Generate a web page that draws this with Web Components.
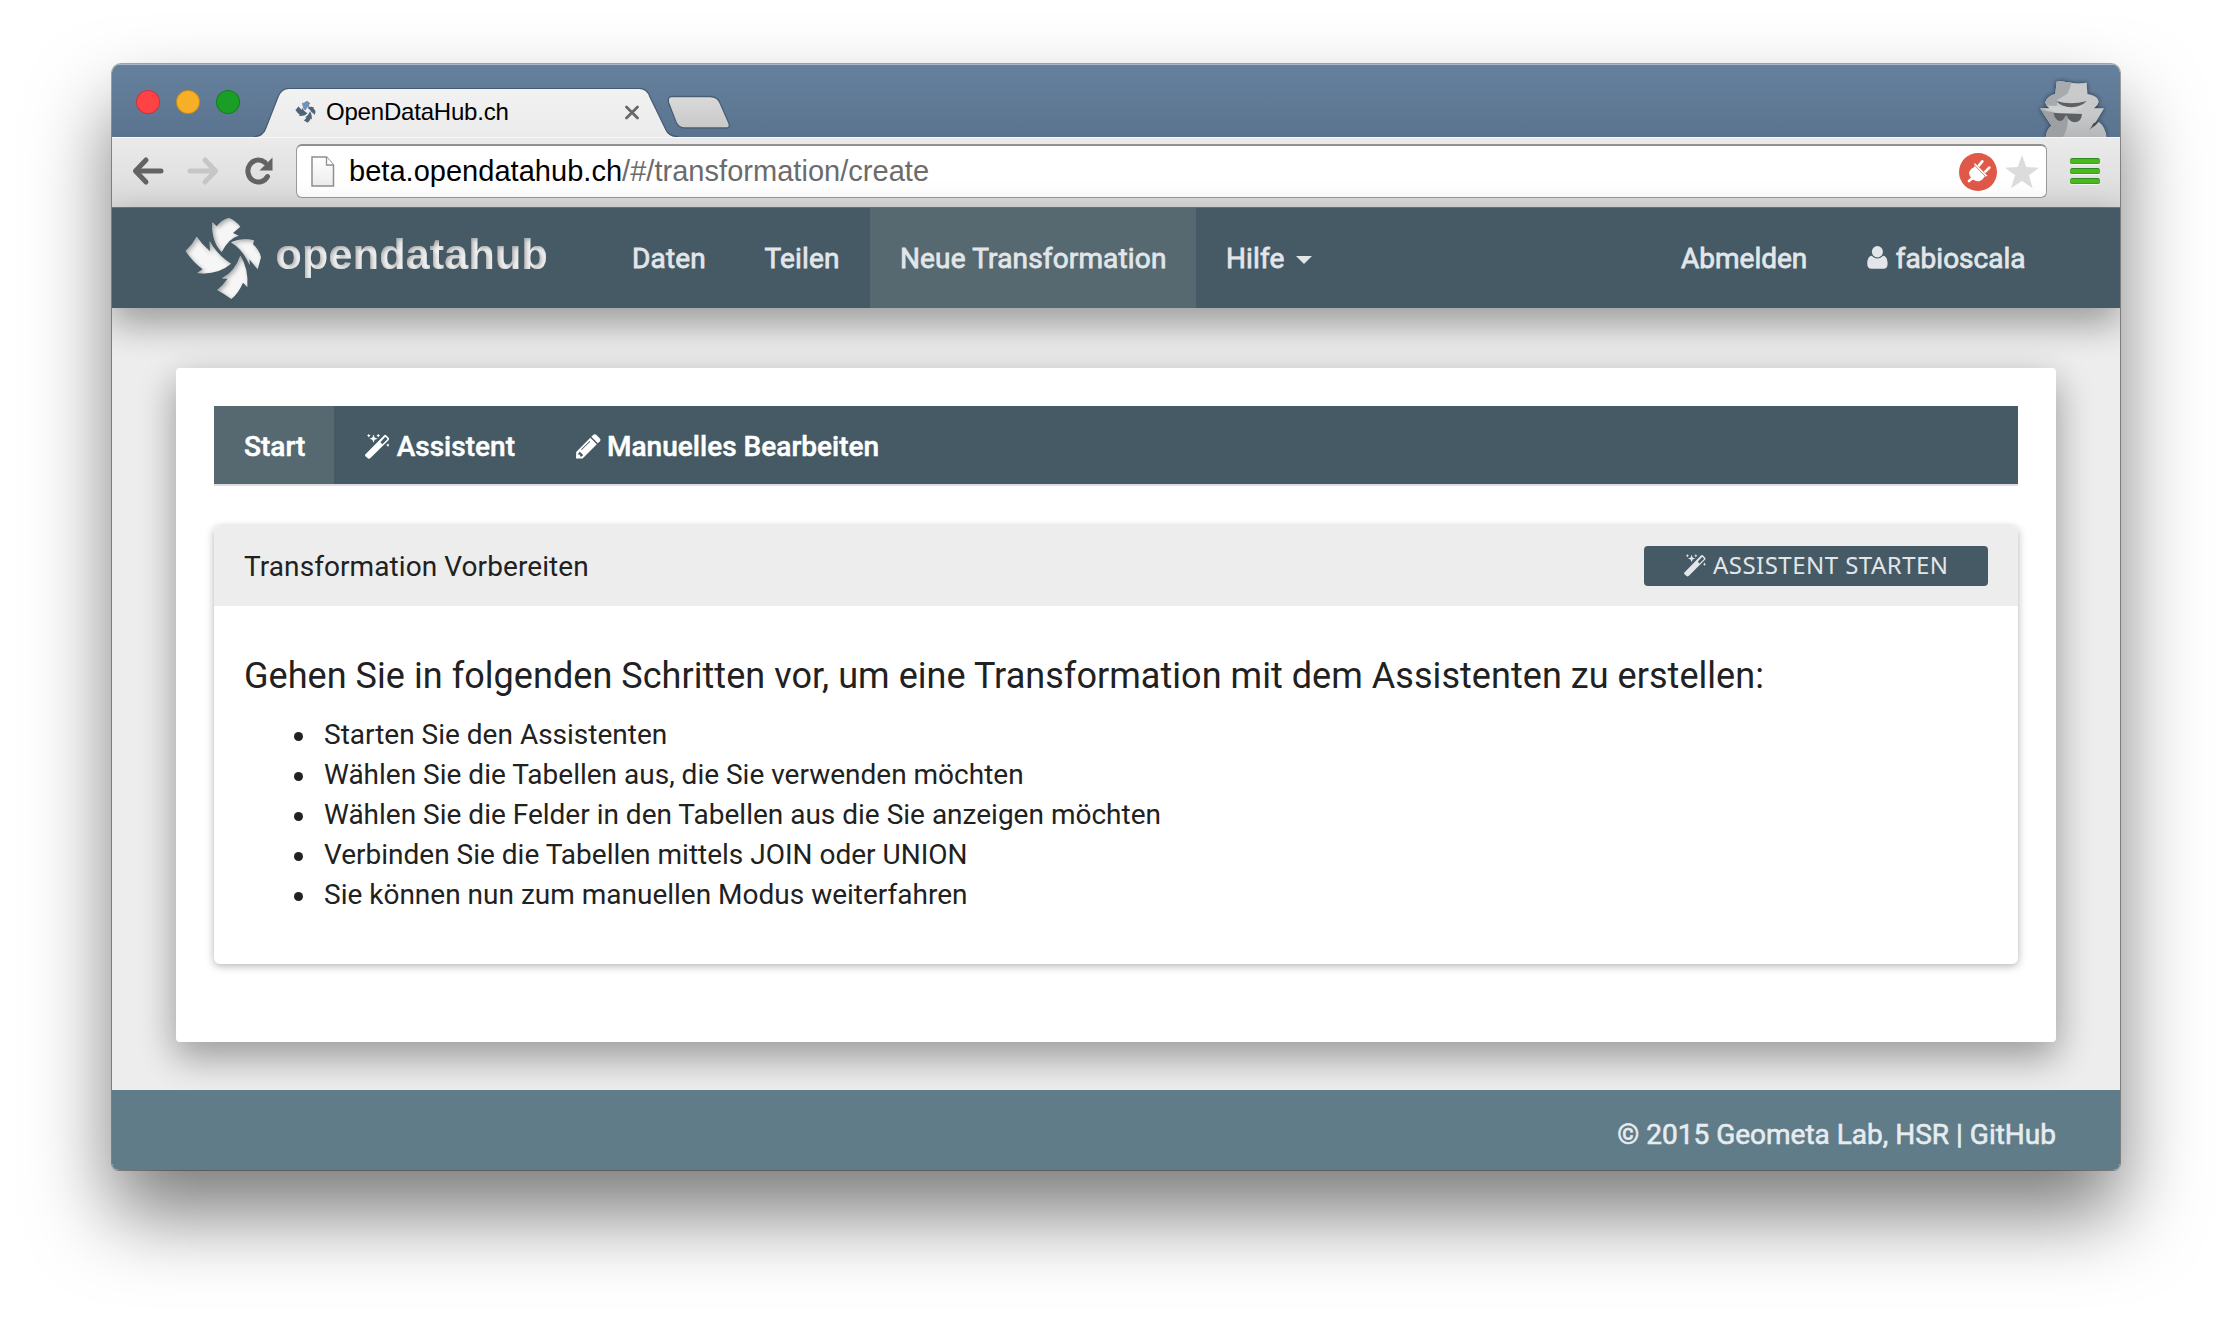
<!DOCTYPE html>
<html lang="de">
<head>
<meta charset="utf-8">
<title>OpenDataHub.ch</title>
<style>
body{margin:0;background:#fff;font-family:Roboto,"Liberation Sans",sans-serif;font-size:28px;color:#212121}
</style>
</head>
<body>
<browser-window>
  <title-bar slot="chrome" label="OpenDataHub.ch"></title-bar>
  <tool-bar slot="chrome" host="beta.opendatahub.ch" path="/#/transformation/create"></tool-bar>
  <site-nav>
    <nav-item style="width:132.5px">Daten</nav-item>
    <nav-item style="width:135.5px">Teilen</nav-item>
    <nav-item style="width:326px" active>Neue Transformation</nav-item>
    <nav-item style="width:146px" caret>Hilfe</nav-item>
    <nav-item slot="end" style="width:185.5px">Abmelden</nav-item>
    <nav-item slot="end" style="width:189px" icon="user">fabioscala</nav-item>
  </site-nav>
  <page-card>
    <tab-nav>
      <nav-item tab active style="width:120px">Start</nav-item>
      <nav-item tab icon="wand" style="width:211px">Assistent</nav-item>
      <nav-item tab icon="pencil">Manuelles Bearbeiten</nav-item>
    </tab-nav>
    <info-panel>
      <span slot="title">Transformation Vorbereiten</span>
      <action-button slot="action">ASSISTENT STARTEN</action-button>
      <step-list heading="Gehen Sie in folgenden Schritten vor, um eine Transformation mit dem Assistenten zu erstellen:">
        <step-item>Starten Sie den Assistenten</step-item>
        <step-item>Wählen Sie die Tabellen aus, die Sie verwenden möchten</step-item>
        <step-item>Wählen Sie die Felder in den Tabellen aus die Sie anzeigen möchten</step-item>
        <step-item>Verbinden Sie die Tabellen mittels JOIN oder UNION</step-item>
        <step-item>Sie können nun zum manuellen Modus weiterfahren</step-item>
      </step-list>
    </info-panel>
  </page-card>
  <site-footer>© 2015 Geometa Lab, HSR | GitHub</site-footer>
</browser-window>

<script>
function define(name, render) {
  customElements.define(name, class extends HTMLElement {
    connectedCallback() {
      if (this.shadowRoot) return;
      this.attachShadow({ mode: 'open' }).innerHTML = render(this);
    }
  });
}

const BLADES = `
  <path d="M97 37 L110 49 Q125 30 146 24 Q165 30 181 50 L159 69 L176 77 Q148 83 125 126 Q94 95 97 37Z"/>
  <path d="M50 80 Q66 103 90 124 L89 94 Q112 135 153 161 Q112 196 52 189 L68 178 Q36 153 17 123 Q38 103 50 80Z"/>
  <path d="M181 137 Q206 175 202 231 L189 218 Q175 250 154 267 Q130 250 112 240 Q130 225 143 206 L126 205 Q165 185 181 137Z"/>
  <path d="M153 97 Q185 82 222 91 L219 103 Q238 120 243 142 L233 178 L208 148 L209 165 Q190 120 153 97Z"/>`;

const ICONS = {
  user: `<svg width="23" height="26" viewBox="0 0 23 26"><ellipse cx="11.3" cy="6.2" rx="6" ry="6.2"/><path d="M5.3 10.6 C7 12.8 9 13.5 11.3 13.5 S15.6 12.8 17.4 10.6 C21 11 22.4 14.5 22.4 19.6 C22.4 23 20.8 24.7 18 24.7 H4.8 C2 24.7 .3 23 .3 19.6 C.3 14.5 1.7 11 5.3 10.6Z"/></svg>`,
  wand: `<svg width="26" height="27" viewBox="0 0 26 27"><path fill-rule="evenodd" d="M.5 21.8 L20 1.800 Q21.300 .5 22.600 1.800 L24.900 4.200 Q26.100 5.500 24.800 6.800 L5.500 26 Q4.200 27 3 25.900 L.5 23.700 Q-.4 22.800 .5 21.800Z M16.300 9 L18.300 11 L23.400 6 Q23.800 5.500 23.300 5 L22 3.700 Q21.500 3.200 21 3.700Z"/><path d="M9 .8 L10.200 4 L13.300 5.200 L10.200 6.400 L9 9.600 L7.800 6.400 L4.700 5.200 L7.800 4Z M4 0 L4.700 1.300 L6 2 L4.700 2.700 L4 4 L3.300 2.700 L2 2 L3.300 1.300Z M14 0 L14.700 1.300 L16 2 L14.700 2.700 L14 4 L13.300 2.700 L12 2 L13.300 1.300Z M24.300 10 L25 11.300 L26 12 L25 12.700 L24.300 14 L23.600 12.700 L22.300 12 L23.600 11.300Z"/></svg>`,
  pencil: `<svg width="25" height="25" viewBox="0 0 25 25"><path fill-rule="evenodd" d="M0 24.5 L.2 18 L14.3 3.8 L20.8 10.3 L6.6 24.4Z M2.4 19.3 L2.3 20.8 H4.1 V22.4 H5.8 L7.2 21 L3.8 17.7Z M13.6 6.9 L5.3 15.2 Q4.9 15.9 5.7 16 L14.1 7.7 Q14.5 6.9 13.6 6.9Z"/><path d="M15.3 2.8 L17.4 .7 Q18.8 -.4 20.2 .7 L23.9 4.4 Q25.1 5.8 23.9 7.2 L21.8 9.3Z"/></svg>`
};

define('browser-window', () => `
  <style>
    :host{display:block;padding:64px 112px 0;height:1330px;box-sizing:border-box;overflow:hidden}
    .frame{height:1106px;border-radius:9px 9px 7px 7px;box-shadow:0 0 0 1px rgba(0,0,0,.34),0 44px 80px rgba(0,0,0,.52)}
    .inner{height:100%;display:flex;flex-direction:column;overflow:hidden;border-radius:inherit;background:#ededed}
  </style>
  <div class="frame"><div class="inner"><slot name="chrome"></slot><slot></slot></div></div>`);

define('title-bar', el => `
  <style>
    :host{display:flex;height:73px;flex:none;align-items:flex-end;box-sizing:border-box;
      background:linear-gradient(#66819d,#5a7490);box-shadow:inset 0 1px #a9b8c7;font:24px "Liberation Sans",Arial,sans-serif;color:#000}
    .lights{display:flex;gap:16px;padding:0 0 23px 24px}
    i{width:24px;height:24px;box-sizing:border-box;border-radius:50%;border:1px solid rgba(0,0,0,.2)}
    .tab{width:424px;height:49px;margin-left:14px;display:grid}
    .tab>*{grid-area:1/1}
    .row{display:flex;align-items:center;height:48px;padding-left:41px}
    .row span{margin-left:10px;width:299px;letter-spacing:-.2px}
    svg{display:block;flex:none}
    .spy{margin-left:auto;margin-right:7px}
  </style>
  <div class="lights"><i style="background:#ff4246"></i><i style="background:#f6af27"></i><i style="background:#1a9e26"></i></div>
  <div class="tab">
    <svg width="424" height="49" viewBox="0 0 424 49">
      <defs><linearGradient id="g" x2="0" y2="1"><stop stop-color="#f2f2f2"/><stop offset="1" stop-color="#ebebeb"/></linearGradient></defs>
      <path d="M2 49 Q9 48 11.5 41 L24 9 Q27.500 .5 35 .5 H385 Q393 .5 396 9 L412 42 Q415 48.500 422 49Z" fill="url(#g)"/>
      <path d="M0 48.500 Q9 48 11.500 41 L24 9 Q27.500 .5 35 .5 H385 Q393 .5 396 9 L412 42 Q415 48.500 424 48.500" fill="none" stroke="#445a72" stroke-width="1.200"/>
    </svg>
    <div class="row">
      <svg width="21" height="22" viewBox="15 22 230 247" fill="#4f6377"><g>${BLADES}</g><path fill="#6c93ba" d="M97 37 L110 49 Q125 30 146 24 Q165 30 181 50 L159 69 L176 77 Q148 83 125 126 Q94 95 97 37Z"/></svg>
      <span>${el.getAttribute('label')}</span>
      <svg width="14" height="15" viewBox="0 0 14 15" stroke="#686868" stroke-width="2.800" stroke-linecap="round"><path d="M1.500 2 L12.500 13 M12.500 2 L1.500 13"/></svg>
    </div>
  </div>
  <svg width="68" height="42" viewBox="0 0 68 42" style="margin-left:-12.500px">
    <defs><linearGradient id="n" x2="0" y2="1"><stop stop-color="#dadada"/><stop offset="1" stop-color="#c8c8c8"/></linearGradient></defs>
    <path d="M5.500 1.500 H44 Q52 1.500 54.500 9 L63 28.500 Q64.500 33 60 33 H19 Q12.500 33 10 27 L2.500 7.500 Q1.500 1.500 5.500 1.500Z" fill="url(#n)" stroke="#485e76" stroke-width="1.300"/>
  </svg>
  <svg class="spy" width="76" height="60" viewBox="470 80 228 180">
    <defs>
      <filter id="glow" x="-20%" y="-20%" width="140%" height="140%"><feDropShadow dx="0" dy="0" stdDeviation="6" flood-color="#1a2938" flood-opacity=".9"/></filter>
      <linearGradient id="s" x2="0" y2="1"><stop stop-color="#c9cbcd"/><stop offset=".6" stop-color="#c6c8ca"/><stop offset="1" stop-color="#b2b4b5"/></linearGradient>
      <clipPath id="hat"><path d="M529 94 Q538 90 560 96 Q590 102 619 97 L621 131 Q656 138 655 155 Q652 166 641 174 H671 L636 232 Q646 226 655 214 Q676 230 679 262 H496 Q498 238 513 226 L479 174 H510 Q496 166 495 155 Q500 138 525 131Z"/></clipPath>
    </defs>
    <g filter="url(#glow)">
      <g clip-path="url(#hat)">
        <rect x="470" y="80" width="228" height="190" fill="url(#s)"/>
        <path d="M470 80 H575 Q575 105 561 130 L530 150 V166 H470Z" fill="#a8abad"/>
        <path d="M478 174 Q500 184 520 186 Q540 194 562 196 Q566 230 547 262 H470Z" fill="#9da0a2"/>
        <path d="M495 166 Q570 170 612 166 Q590 190 545 189 Q515 186 495 166Z" fill="#cfd1d3"/>
      </g>
      <path d="M528 152 Q572 166 619 152 Q602 170 573 171 Q543 170 528 152Z" fill="#5d6163"/>
      <path d="M520 188 L605 191 Q604 214 584 216 Q564 214 560 196 H555 Q550 212 537 212 Q523 208 520 188Z" fill="#5d6163"/>
      <path d="M655 214 L628 238 L640 218Z" fill="#4b5054"/>
    </g>
  </svg>`);

define('tool-bar', el => `
  <style>
    :host{display:flex;height:71px;flex:none;box-sizing:border-box;align-items:center;padding:0 20px 2px;
      background:linear-gradient(#ebebeb,#dadada);border-bottom:1px solid #77787a;box-shadow:inset 0 1px #f8f8f8;font:29px "Liberation Sans",Arial,sans-serif;color:#000}
    svg{display:block;flex:none}
    .url{display:flex;align-items:center;box-sizing:border-box;width:1752px;height:54px;margin-left:22px;padding:0 7px 0 14px;
      background:#fff;border:1px solid #9a9a9a;border-top:2px solid #909090;border-radius:6px}
    .url span{margin-left:14px;flex:1;color:#6b6b6b;letter-spacing:.03px;white-space:nowrap}
    b{font-weight:400;color:#000}
    .menu{display:flex;flex-direction:column;gap:4px;margin-left:23px}
    .menu i{width:30px;height:6px;border-radius:2.500px;background:#4cb81f;border-top:1.500px solid #2a8a1c;box-sizing:border-box;box-shadow:0 1px #f6f6f6,inset 0 -1px #3ca21c}
  </style>
  <svg width="32" height="30" viewBox="0 0 32 30" fill="none" stroke="#636363" stroke-width="5"><path d="M4 15 H29" stroke-linecap="round"/><path d="M14 4 L3.500 15 L14 26" stroke-linecap="round" stroke-linejoin="round"/></svg>
  <svg style="margin-left:23px" width="32" height="30" viewBox="0 0 32 30" fill="none" stroke="#c6c6c6" stroke-width="5"><path d="M3 15 H28" stroke-linecap="round"/><path d="M18 4 L28.500 15 L18 26" stroke-linecap="round" stroke-linejoin="round"/></svg>
  <svg style="margin-left:25px" width="30" height="30" viewBox="0 0 30 30"><path d="M23.500 20.500 A10.500 11 0 1 1 21 6.500" fill="none" stroke="#636363" stroke-width="5" stroke-linecap="round"/><path d="M28.500 1.500 V14.500 H15.500Z" fill="#636363"/></svg>
  <div class="url">
    <svg width="24" height="31" viewBox="0 0 24 31"><defs><linearGradient id="d" x2="0" y2="1"><stop stop-color="#fff"/><stop offset="1" stop-color="#ececec"/></linearGradient></defs><path d="M1 1 H15.500 L22.500 9 V30 H1Z" fill="url(#d)" stroke="#8e8e8e" stroke-width="1.500"/><path d="M15.500 1 V9 H22.500" fill="#fff" stroke="#8e8e8e" stroke-width="1.300"/></svg>
    <span><b>${el.getAttribute('host')}</b>${el.getAttribute('path')}</span>
    <svg width="38" height="38" viewBox="0 0 114 114"><circle cx="57" cy="57" r="57" fill="#df5848"/>
      <g fill="#fff" stroke="#fff" stroke-linecap="round"><path d="M47 29 L86 69 L76 71 Q69 85 53 85 L44 81 Q31 74 30 58 Q35 46 46 42Z" stroke="none"/><path d="M60 37 L70 25 M79 56 L91 44" stroke-width="8"/><path d="M40 76 L30 84" stroke-width="8"/></g>
      <path d="M46 36 L80 71" stroke="#df5848" stroke-width="2.500"/></svg>
    <svg style="margin-left:8px" width="34" height="34" viewBox="0 0 102 102"><path fill="#dcdcdc" d="M51 0 L64 36 L102 38 L72 61 L83 100 L51 78 L18 100 L30 61 L0 38 L38 36Z"/></svg>
  </div>
  <div class="menu"><i></i><i></i><i></i></div>`);

define('site-nav', () => `
  <style>
    :host{display:flex;height:100px;flex:none;background:#455a64;color:#e2e6e9;position:relative;z-index:1;
      box-shadow:0 16px 34px rgba(0,0,0,.2),0 12px 40px rgba(0,0,0,.19)}
    .logo{display:block;margin-left:58px;width:432px;flex:none}
    .links,.end{display:flex}
    .end{margin-left:auto;padding-right:94.500px}
  </style>
  <svg class="logo" width="432" height="100" viewBox="0 0 432 100" fill="#f6f6f6">
    <defs>
      <filter id="in" x="-5%" y="-5%" width="110%" height="110%">
        <feOffset in="SourceAlpha" dx="1.500" dy="1.500" result="o"/>
        <feGaussianBlur in="o" stdDeviation="2" result="b"/>
        <feComposite in="SourceAlpha" in2="b" operator="out" result="e"/>
        <feFlood flood-color="#3a3a3a" flood-opacity=".62"/>
        <feComposite in2="e" operator="in" result="s"/>
        <feMerge><feMergeNode in="SourceGraphic"/><feMergeNode in="s"/></feMerge>
      </filter>
    </defs>
    <g filter="url(#in)"><g transform="translate(10 2) scale(.3333)">${BLADES}</g></g>
    <text filter="url(#in)" x="105.500" y="61" font-family="Liberation Sans,Arial,sans-serif" font-weight="700" font-size="43" letter-spacing=".23">opendatahub</text>
  </svg>
  <div class="links"><slot></slot></div>
  <div class="end"><slot name="end"></slot></div>`);

define('nav-item', el => {
  const tab = el.hasAttribute('tab'), icon = el.getAttribute('icon');
  return `
  <style>
    :host{display:flex;align-items:center;box-sizing:border-box;padding:${tab ? '2px 30px 0 30px' : '0 0 0 30px'};white-space:nowrap;
      ${tab ? 'color:#fff;font-weight:500;letter-spacing:.02px;-webkit-text-stroke:.5px currentColor' : '-webkit-text-stroke:.8px currentColor;letter-spacing:' + (icon || el.slot ? '0' : '.15px')}}
    :host([active]){background:#566970}
    svg{display:block;fill:currentColor;margin-left:${icon === 'wand' ? 0.5 : icon === 'pencil' ? 1 : 0}px;margin-right:${icon === 'wand' ? 7.5 : icon === 'pencil' ? 6 : 8}px}
    .caret{border:8px solid transparent;border-top:8px solid currentColor;border-bottom:0;margin:4px 0 0 11px}
  </style>
  ${icon ? ICONS[icon] : ''}<slot></slot>${el.hasAttribute('caret') ? '<div class="caret"></div>' : ''}`;
});

define('page-card', () => `
  <style>
    :host{display:block;box-sizing:border-box;width:1880px;height:674px;margin:60px 64px 48px;padding:38px;flex:none;background:#fff;border-radius:4px;
      box-shadow:0 16px 34px rgba(0,0,0,.2),0 12px 40px rgba(0,0,0,.19)}
  </style><slot></slot>`);

define('tab-nav', () => `
  <style>:host{display:flex;height:78px;background:#455a64;border-bottom:2px solid #e0dce2}</style><slot></slot>`);

define('info-panel', () => `
  <style>
    :host{display:block;margin-top:40px;height:438px;background:#fff;border-radius:6px;box-shadow:0 2px 8px rgba(0,0,0,.3)}
    header{display:flex;align-items:center;justify-content:space-between;height:80px;padding:0 30px;box-sizing:border-box;background:#ededed;border-radius:6px 6px 0 0;letter-spacing:.08px}
    section{padding:50px 30px 0}
  </style>
  <header><slot name="title"></slot><slot name="action"></slot></header>
  <section><slot></slot></section>`);

define('action-button', () => `
  <style>
    :host{display:flex;align-items:center;justify-content:center;box-sizing:border-box;width:344px;height:40px;padding:0 0 2px 1px;border-radius:4px;
      background:#455a64;color:#e2e6e9;font:24px/36px "Noto Sans",sans-serif;letter-spacing:.47px}
    svg{display:block;fill:currentColor;width:22px;height:23px;margin-right:6.500px}
  </style>${ICONS.wand}<slot></slot>`);

define('step-list', el => `
  <style>
    :host{display:block}
    h3{margin:0 0 19px;font-weight:400;font-size:36px;line-height:40px;letter-spacing:.045px}
    ul{margin:0;padding:0 0 0 80px;list-style:none}
  </style><h3>${el.getAttribute('heading')}</h3><ul><slot></slot></ul>`);

define('step-item', () => `
  <style>
    :host{display:flex;align-items:center;line-height:40px;letter-spacing:0}
    i{width:9px;height:9px;border-radius:50%;background:#212121;margin:2px 21px 0 -30px}
  </style><i></i><slot></slot>`);

define('site-footer', () => `
  <style>
    :host{display:flex;justify-content:flex-end;align-items:center;height:80px;box-sizing:border-box;padding:9px 64px 0;background:#607c88;color:#e6ecef;-webkit-text-stroke:.6px currentColor}
  </style><slot></slot>`);
</script>
</body>
</html>
